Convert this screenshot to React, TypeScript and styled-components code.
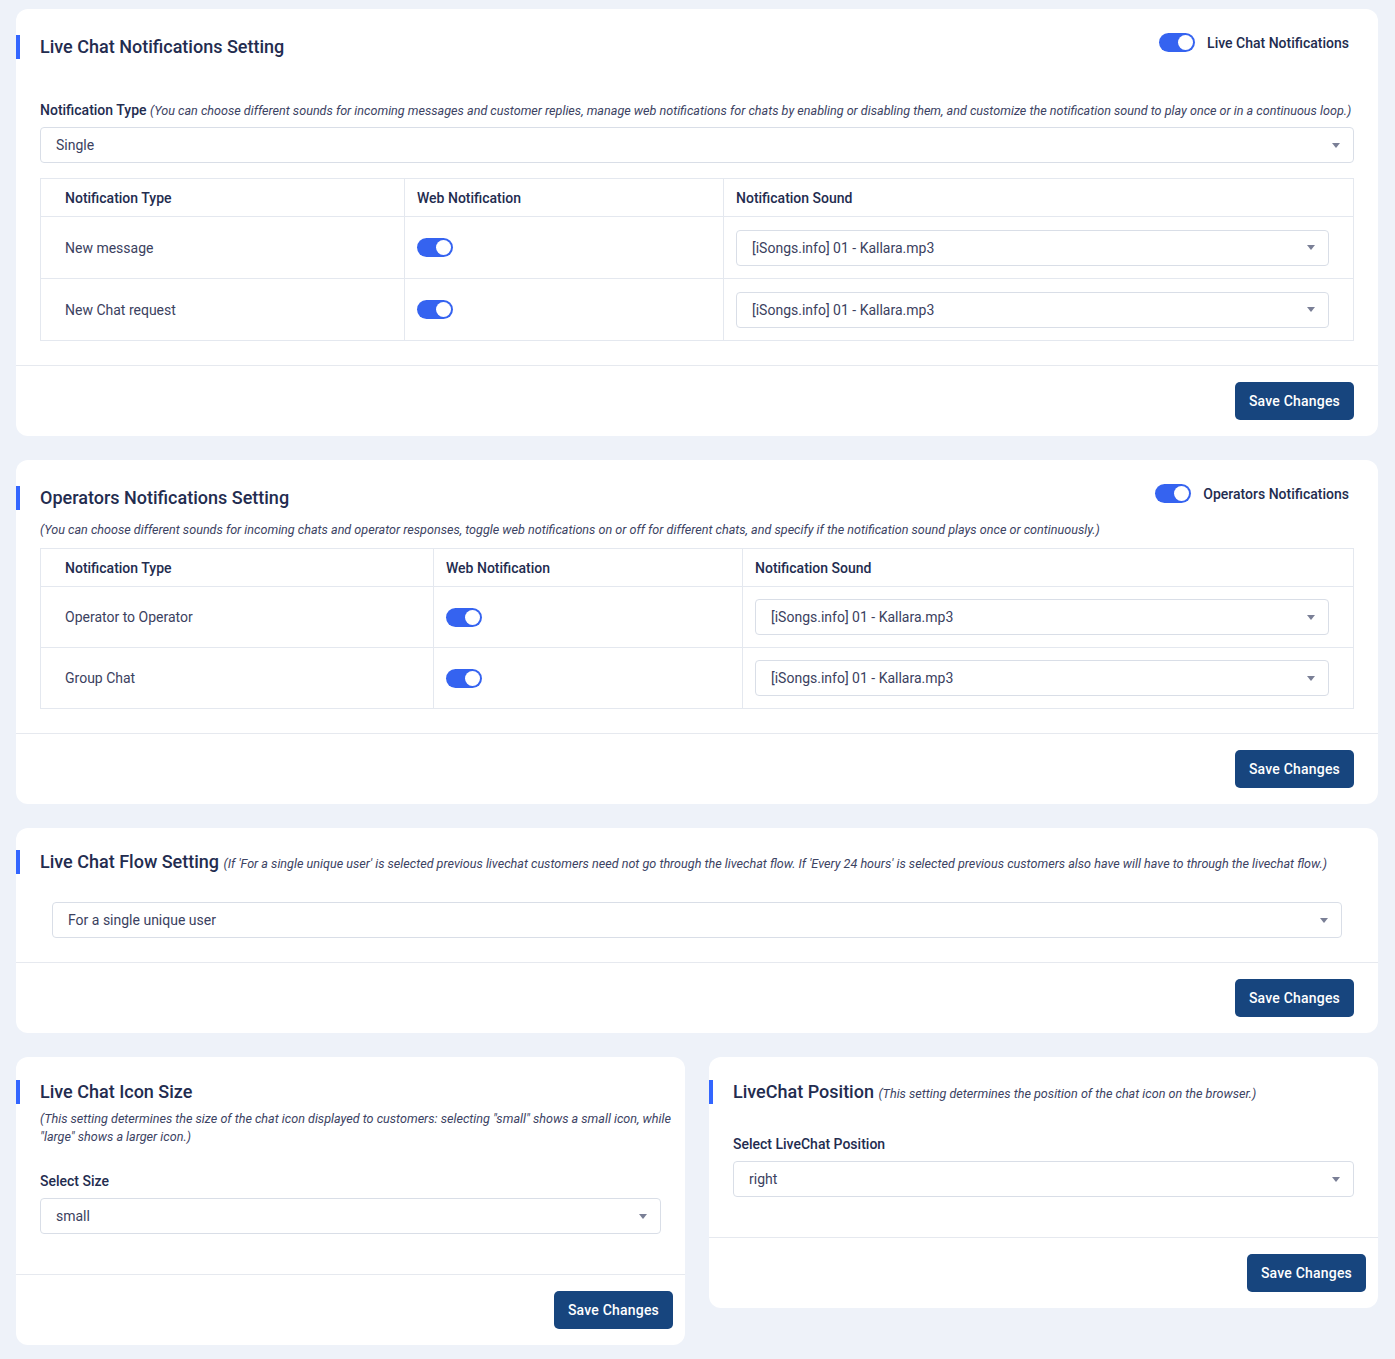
import styled, { createGlobalStyle } from "styled-components";

const GlobalStyle = createGlobalStyle`
  * { box-sizing: border-box; }
  body {
    margin: 0;
    background: #eef2f9;
    font-family: Roboto, "Liberation Sans", Arial, sans-serif;
    color: #2a3150;
  }
`;

const sounds = "[iSongs.info] 01 - Kallara.mp3";

const liveRows = ["New message", "New Chat request"];
const operatorRows = ["Operator to Operator", "Group Chat"];

function Toggle() {
  return (
    <Switch>
      <Knob />
    </Switch>
  );
}

function Select({ value }: { value: string }) {
  return (
    <SelectBox>
      <span>{value}</span>
      <Caret />
    </SelectBox>
  );
}

interface TableProps {
  rows: string[];
  cols: [number, number];
  rowHeight: number;
}

function SoundTable({ rows, cols, rowHeight }: TableProps) {
  return (
    <Table>
      <colgroup>
        <col style={{ width: cols[0] }} />
        <col style={{ width: cols[1] }} />
        <col />
      </colgroup>
      <thead>
        <tr>
          <Th first>Notification Type</Th>
          <Th>Web Notification</Th>
          <Th>Notification Sound</Th>
        </tr>
      </thead>
      <tbody>
        {rows.map((r) => (
          <tr key={r}>
            <Td first h={rowHeight}>
              {r}
            </Td>
            <Td h={rowHeight}>
              <Toggle />
            </Td>
            <Td pad h={rowHeight}>
              <Select value={sounds} />
            </Td>
          </tr>
        ))}
      </tbody>
    </Table>
  );
}

function App() {
  return (
    <>
      <GlobalStyle />
      <Page>
        <Card>
          <HeadRow top={26}>
            <Title>Live Chat Notifications Setting</Title>
            <ToggleLabel>
              <Toggle />
              Live Chat Notifications
            </ToggleLabel>
          </HeadRow>
          <Body top={42}>
            <FieldLabel tight>
              Notification Type{" "}
              <Hint>
                (You can choose different sounds for incoming messages and
                customer replies, manage web notifications for chats by
                enabling or disabling them, and customize the notification
                sound to play once or in a continuous loop.)
              </Hint>
            </FieldLabel>
            <Select value="Single" />
            <Spacer h={15} />
            <SoundTable rows={liveRows} cols={[364, 319]} rowHeight={62} />
          </Body>
          <Footer>
            <SaveButton>Save Changes</SaveButton>
          </Footer>
        </Card>

        <Card>
          <HeadRow top={26}>
            <Title>Operators Notifications Setting</Title>
            <ToggleLabel>
              <Toggle />
              Operators Notifications
            </ToggleLabel>
          </HeadRow>
          <Body top={11}>
            <Hint block>
              (You can choose different sounds for incoming chats and operator
              responses, toggle web notifications on or off for different
              chats, and specify if the notification sound plays once or
              continuously.)
            </Hint>
            <Spacer h={9} />
            <SoundTable rows={operatorRows} cols={[393, 309]} rowHeight={61} />
          </Body>
          <Footer>
            <SaveButton>Save Changes</SaveButton>
          </Footer>
        </Card>

        <Card>
          <HeadRow top={22}>
            <Title>
              Live Chat Flow Setting{" "}
              <Hint>
                (If 'For a single unique user' is selected previous livechat
                customers need not go through the livechat flow. If 'Every 24
                hours' is selected previous customers also have will have to
                through the livechat flow.)
              </Hint>
            </Title>
          </HeadRow>
          <Body top={28} inset={36}>
            <Select value="For a single unique user" />
          </Body>
          <Footer>
            <SaveButton>Save Changes</SaveButton>
          </Footer>
        </Card>

        <Split>
          <Card>
            <HeadRow top={23}>
              <Title>Live Chat Icon Size</Title>
            </HeadRow>
            <Body top={6} right={12} bottom={40}>
              <Hint block>
                (This setting determines the size of the chat icon displayed to
                customers: selecting "small" shows a small icon, while "large"
                shows a larger icon.)
              </Hint>
              <Spacer h={26} />
              <FieldLabel>Select Size</FieldLabel>
              <SelectWrap right={12}>
                <Select value="small" />
              </SelectWrap>
            </Body>
            <Footer compact>
              <SaveButton>Save Changes</SaveButton>
            </Footer>
          </Card>

          <Card>
            <HeadRow top={23}>
              <Title>
                LiveChat Position{" "}
                <Hint>
                  (This setting determines the position of the chat icon on the
                  browser.)
                </Hint>
              </Title>
            </HeadRow>
            <Body top={31} bottom={40}>
              <FieldLabel>Select LiveChat Position</FieldLabel>
              <Select value="right" />
            </Body>
            <Footer compact>
              <SaveButton>Save Changes</SaveButton>
            </Footer>
          </Card>
        </Split>
      </Page>
    </>
  );
}

const Page = styled.div`
  padding: 9px 17px 14px 16px;
  display: flex;
  flex-direction: column;
  gap: 24px;
`;

const Split = styled.div`
  display: grid;
  grid-template-columns: 1fr 1fr;
  gap: 24px;
  align-items: start;
`;

const Card = styled.section`
  background: #fff;
  border-radius: 12px;
  overflow: hidden;
`;

const HeadRow = styled.div<{ top: number }>`
  display: flex;
  align-items: flex-start;
  justify-content: space-between;
  padding: ${(p) => p.top}px 29px 0 0;
`;

const Title = styled.h2`
  margin: 0;
  padding-left: 20px;
  border-left: 4px solid #3366ff;
  font-size: 18px;
  font-weight: 500;
  line-height: 24px;
  color: #232c4f;
`;

const Hint = styled.i<{ block?: boolean }>`
  display: ${(p) => (p.block ? "block" : "inline")};
  font-size: 12.6px;
  font-weight: 400;
  line-height: 18px;
  color: #3c4363;
`;

const ToggleLabel = styled.label`
  display: flex;
  align-items: center;
  gap: 12px;
  margin-top: -2px;
  font-size: 14px;
  font-weight: 500;
  color: #232c4f;
  line-height: 18px;
`;

const Switch = styled.span`
  position: relative;
  display: inline-block;
  width: 36px;
  height: 19px;
  border-radius: 10px;
  background: #3563f0;
`;

const Knob = styled.span`
  position: absolute;
  top: 2px;
  right: 2px;
  width: 15px;
  height: 15px;
  border-radius: 50%;
  background: #fff;
`;

const Body = styled.div<{
  top: number;
  inset?: number;
  right?: number;
  bottom?: number;
}>`
  padding: ${(p) => p.top}px ${(p) => p.right ?? p.inset ?? 24}px
    ${(p) => p.bottom ?? 24}px ${(p) => p.inset ?? 24}px;
`;

const FieldLabel = styled.div<{ tight?: boolean }>`
  font-size: 14px;
  font-weight: 500;
  color: #232c4f;
  line-height: 18px;
  margin-bottom: ${(p) => (p.tight ? 7 : 8)}px;
`;

const SelectWrap = styled.div<{ right: number }>`
  margin-right: ${(p) => p.right}px;
`;

const SelectBox = styled.div`
  display: flex;
  align-items: center;
  justify-content: space-between;
  height: 36px;
  padding: 0 13px 0 15px;
  border: 1px solid #d9dee7;
  border-radius: 4px;
  background: #fff;
  font-size: 14px;
  color: #3b4160;
`;

const Caret = styled.span`
  width: 0;
  height: 0;
  border-left: 4px solid transparent;
  border-right: 4px solid transparent;
  border-top: 5px solid #7a7f96;
`;

const Spacer = styled.div<{ h: number }>`
  height: ${(p) => p.h}px;
`;

const Table = styled.table`
  width: 100%;
  border-collapse: collapse;
  table-layout: fixed;
  border: 1px solid #e4e8ef;
`;

const Th = styled.th<{ first?: boolean }>`
  height: 38px;
  padding: 0 ${(p) => (p.first ? "24px" : "12px")};
  text-align: left;
  font-size: 14px;
  font-weight: 500;
  color: #232c4f;
  border: 1px solid #e4e8ef;
`;

const Td = styled.td<{ first?: boolean; pad?: boolean; h: number }>`
  height: ${(p) => p.h}px;
  padding: 0 ${(p) => (p.pad ? "24px" : "12px")} 0
    ${(p) => (p.first ? "24px" : "12px")};
  font-size: 14px;
  color: #3b4160;
  border: 1px solid #e4e8ef;
  vertical-align: middle;
  & > span {
    vertical-align: middle;
  }
`;

const Footer = styled.div<{ compact?: boolean }>`
  display: flex;
  justify-content: flex-end;
  padding: 16px ${(p) => (p.compact ? "12px" : "24px")} 16px;
  border-top: 1px solid #e6e9ef;
`;

const SaveButton = styled.button`
  height: 38px;
  padding: 0 14px;
  border: none;
  border-radius: 5px;
  background: #17457e;
  color: #fff;
  font-family: Roboto, "Liberation Sans", Arial, sans-serif;
  font-size: 14px;
  font-weight: 500;
  letter-spacing: 0.2px;
`;

export default App;
